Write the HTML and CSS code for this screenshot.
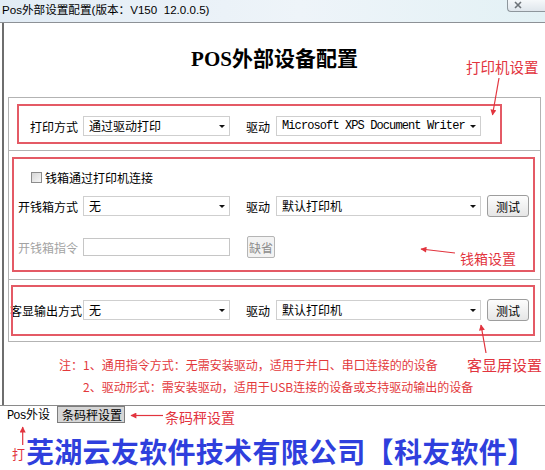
FILE: index.html
```html
<!DOCTYPE html>
<html lang="zh-CN">
<head>
<meta charset="utf-8">
<title>Pos外部设置配置</title>
<link rel="stylesheet" href="styles.css">
</head>
<body>
<div class="screen">
  <div class="titlebar">
    <span class="wtitle">Pos外部设置配置(版本：V150  12.0.0.5)</span>
    <span class="close"><svg width="8" height="8" viewBox="0 0 8 8"><path d="M1 1 L7 7 M7 1 L1 7" stroke="#6d7378" stroke-width="1.6" fill="none"/></svg></span>
  </div>
  <div class="window">
    <h1 class="heading">POS外部设备配置</h1>

    <div class="panel p1">
      <div class="row row-s">
        <span class="lbl">打印方式</span>
        <div class="combo c1">通过驱动打印</div>
        <span class="lbl2">驱动</span>
        <div class="combo c2 mono">Microsoft XPS Document Writer</div>
      </div>
    </div>

    <div class="panel p2">
      <div class="checkrow"><span class="check"></span><span>钱箱通过打印机连接</span></div>
      <div class="row r-open">
        <span class="lbl">开钱箱方式</span>
        <div class="combo c1">无</div>
        <span class="lbl2">驱动</span>
        <div class="combo c2">默认打印机</div>
        <span class="btn">测试</span>
      </div>
      <div class="row r-cmd">
        <span class="lbl dis">开钱箱指令</span>
        <div class="input"></div>
        <span class="btn-dis">缺省</span>
      </div>
    </div>

    <div class="panel p3">
      <div class="row">
        <span class="lbl">客显输出方式</span>
        <div class="combo c1">无</div>
        <span class="lbl2">驱动</span>
        <div class="combo c2">默认打印机</div>
        <span class="btn">测试</span>
      </div>
    </div>

    <div class="notes">
      <p class="note1">注：1、通用指令方式：无需安装驱动，适用于并口、串口连接的的设备</p>
      <p class="note2">2、驱动形式：需安装驱动，适用于USB连接的设备或支持驱动输出的设备</p>
    </div>
  </div>

  <div class="tabs">
    <span class="tab1"><span class="mono">Pos</span>外设</span>
    <span class="tab2">条码秤设置</span>
  </div>

  <div class="footer">
    <span class="da">打</span><span class="company">芜湖云友软件技术有限公司【科友软件】</span>
  </div>

  <div class="rbox r1"></div>
  <div class="rbox r2"></div>
  <div class="rbox r3"></div>

  <span class="ann a-printer">打印机设置</span>
  <span class="ann a-drawer">钱箱设置</span>
  <span class="ann a-display">客显屏设置</span>
  <span class="ann a-scale">条码秤设置</span>

  <svg class="arrows" width="545" height="470" viewBox="0 0 545 470">
    <defs>
      <marker id="ah" viewBox="0 0 10 10" refX="9" refY="5" markerWidth="6" markerHeight="5" orient="auto">
        <path d="M0,0 L10,5 L0,10 z" fill="#e2343e"/>
      </marker>
    </defs>
    <g stroke="#e2343e" stroke-width="1.2" fill="none" marker-end="url(#ah)">
      <line x1="499" y1="78" x2="492.5" y2="115"/>
      <line x1="455" y1="253" x2="421" y2="249"/>
      <line x1="486" y1="353" x2="481" y2="325"/>
      <line x1="163" y1="415.5" x2="131" y2="415.5"/>
      <line x1="22.7" y1="445" x2="22.7" y2="427"/>
    </g>
  </svg>
</div>
</body>
</html>
```

FILE: styles.css
```css
body {
  margin: 0;
}

.screen {
  position: relative;
  width: 545px;
  height: 470px;
  overflow: hidden;
  background: #ffffff;
  font-family: "Noto Sans CJK SC", sans-serif;
  font-size: 12px;
  color: #000;
}

.mono {
  font-family: "Liberation Mono", "Noto Sans CJK SC", monospace;
  letter-spacing: -0.9px;
}

/* title bar */
.titlebar {
  display: flex;
  justify-content: space-between;
  align-items: flex-start;
  height: 22px;
  border-bottom: 1px solid #8d9196;
  background: linear-gradient(to right, #e2ecf5, #eef4f9 55%, #e3f1f5);
}

.wtitle {
  padding-left: 2px;
  line-height: 19px;
  font-family: "Liberation Sans", "Noto Sans CJK SC", sans-serif;
  font-size: 11.6px;
  white-space: pre;
}

.close {
  display: flex;
  align-items: flex-start;
  width: 38px;
  height: 12px;
  padding: 1px 0 0 6px;
  box-sizing: border-box;
  border: 1px solid #8e969c;
  border-top: none;
  border-right: none;
  border-radius: 0 0 0 4px;
  background: linear-gradient(#f5f8fa, #dfe6ec);
}

/* window body */
.window {
  margin-left: 2px;
  border-left: 2px solid #6e6e6e;
  padding-bottom: 7px;
}

.heading {
  margin: 0 0 26px;
  padding-top: 24px;
  line-height: 24px;
  font-size: 21px;
  font-weight: bold;
  text-align: center;
  font-family: "Liberation Serif", "Noto Sans CJK SC", serif;
}

.panel {
  margin-left: 4px;
  width: 533px;
  box-sizing: border-box;
  border: 1px solid #b3b3b3;
}

.p1 { padding: 18px 0 14px; }
.p2 { border-top: none; padding: 18px 0 21px; }
.p3 { border-top: none; padding: 19px 0 20px; }

.row {
  display: flex;
  align-items: center;
  height: 22px;
}

.row-s { height: 20px; }

.lbl {
  width: 74px;
  box-sizing: border-box;
  white-space: nowrap;
}

.p1 .lbl { padding-left: 21px; }
.p2 .lbl { padding-left: 9px; }
.p3 .lbl { padding-left: 1px; }

.lbl.dis { color: #a3a3a3; }

.lbl2 {
  width: 46px;
  padding-left: 16px;
  box-sizing: border-box;
  white-space: nowrap;
}

.combo {
  position: relative;
  height: 20px;
  box-sizing: border-box;
  border: 1px solid #cfcfcf;
  background: #fff;
  padding-left: 5px;
  line-height: 18px;
  white-space: nowrap;
}

.combo::after {
  content: "";
  position: absolute;
  right: 4px;
  top: 8px;
  border-left: 3px solid transparent;
  border-right: 3px solid transparent;
  border-top: 3px solid #111;
}

.c1 { width: 147px; }
.c2 { width: 205px; }

.btn {
  display: flex;
  align-items: center;
  justify-content: center;
  margin-left: 6px;
  width: 42px;
  height: 22px;
  box-sizing: border-box;
  border: 1px solid #9d9d9d;
  border-radius: 3px;
  background: linear-gradient(#fdfdfd, #e6e6e6);
}

.checkrow {
  display: flex;
  align-items: center;
  gap: 3px;
  height: 16px;
  padding-left: 22px;
}

.check {
  width: 11px;
  height: 11px;
  box-sizing: border-box;
  border: 1px solid #8c8c8c;
  background: linear-gradient(135deg, #d6d6d6, #f7f7f7);
}

.r-open { margin-top: 10px; }
.r-cmd { margin-top: 19px; }

.input {
  width: 147px;
  height: 18px;
  box-sizing: border-box;
  border: 1px solid #c6c6c6;
  background: #fff;
}

.btn-dis {
  display: flex;
  align-items: center;
  justify-content: center;
  margin-left: 17px;
  width: 28px;
  height: 22px;
  box-sizing: border-box;
  border: 1px solid #b5b5b5;
  border-radius: 2px;
  color: #8c8c8c;
  background: #f3f3f3;
}

.notes {
  margin-top: 12px;
  color: #e3393c;
  line-height: 22px;
}

.notes p { margin: 0; white-space: nowrap; }
.note1 { padding-left: 55px; }
.note2 { padding-left: 79px; }

/* tabs */
.tabs {
  display: flex;
  align-items: flex-start;
  height: 17px;
  border-top: 1px solid #8a8a8a;
}

.tab1 {
  width: 50px;
  box-sizing: border-box;
  padding-left: 7px;
  margin-right: 7px;
  line-height: 16px;
  white-space: nowrap;
}

.tab2 {
  height: 17px;
  box-sizing: border-box;
  border: 1px solid #7d7d7d;
  background: #d6d6d6;
  padding: 0 2px 0 4px;
  line-height: 15px;
  white-space: nowrap;
}

/* footer */
.footer {
  display: flex;
  align-items: center;
  height: 32px;
  margin-top: 12px;
  padding-left: 12px;
}

.da {
  width: 13px;
  margin-right: 1px;
  margin-top: 5px;
  color: #e2343e;
  font-size: 13px;
  line-height: 16px;
}

.company {
  color: #2f3fdd;
  font-size: 28px;
  font-weight: bold;
  line-height: 32px;
  letter-spacing: 0.3px;
  white-space: nowrap;
}

/* annotations */
.rbox {
  position: absolute;
  box-sizing: border-box;
  border: 2px solid #e45a65;
}

.r1 { left: 17px; top: 104px; width: 485px; height: 40px; }
.r2 { left: 12px; top: 157px; width: 523px; height: 115px; }
.r3 { left: 11px; top: 285px; width: 524px; height: 51px; }

.ann {
  position: absolute;
  color: #e2343e;
  font-size: 14px;
  line-height: 16px;
  white-space: nowrap;
}

.a-printer { left: 466px; top: 59px; font-size: 14.5px; }
.a-drawer { left: 460px; top: 250px; }
.a-display { left: 467px; top: 356px; font-size: 15px; line-height: 17px; }
.a-scale { left: 165px; top: 409px; }

.arrows {
  position: absolute;
  left: 0;
  top: 0;
  pointer-events: none;
}
```
